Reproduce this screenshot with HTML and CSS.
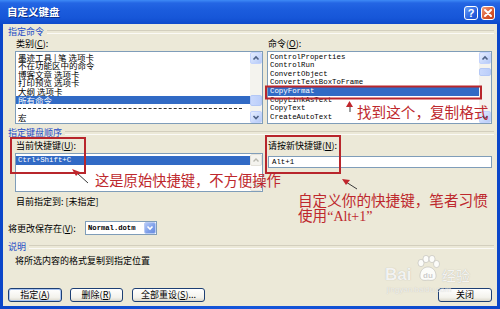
FILE: index.html
```html
<!DOCTYPE html>
<html>
<head>
<meta charset="utf-8">
<link rel="stylesheet" href="styles.css">
</head>
<body>
<div class="window">
  <div class="titlebar">
    <span class="title">自定义键盘</span>
    <div class="tbtns">
      <span class="tbtn help">?</span>
      <span class="tbtn close"><svg width="10" height="10" viewBox="0 0 10 10"><path d="M2 2 L8 8 M8 2 L2 8" stroke="#fff" stroke-width="2" stroke-linecap="round"/></svg></span>
    </div>
  </div>
  <div class="client">
    <div class="group"><span>指定命令</span></div>
    <div class="cols">
      <div class="col left">
        <div class="lbl">类别(<u>C</u>):</div>
        <div class="list tall">
          <div class="items cjk">
            <div class="it">墨迹工具 | 笔 选项卡</div>
            <div class="it">不在功能区中的命令</div>
            <div class="it">博客文章 选项卡</div>
            <div class="it">打印预览 选项卡</div>
            <div class="it">大纲 选项卡</div>
            <div class="it sel">所有命令</div>
            <div class="it dash"><span></span></div>
            <div class="it">宏</div>
          </div>
          <div class="sb">
            <div class="arr"><svg width="10" height="10" viewBox="0 0 10 10"><path d="M2.5 6.5 L5 4 L7.5 6.5" fill="none" stroke="#4D6185" stroke-width="1.6"/></svg></div>
            <div class="track"><div class="thumb t-left"></div></div>
            <div class="arr"><svg width="10" height="10" viewBox="0 0 10 10"><path d="M2.5 4 L5 6.5 L7.5 4" fill="none" stroke="#4D6185" stroke-width="1.6"/></svg></div>
          </div>
        </div>
      </div>
      <div class="col right">
        <div class="lbl">命令(<u>O</u>):</div>
        <div class="list tall">
          <div class="items mono">
            <div class="it">ControlProperties</div>
            <div class="it">ControlRun</div>
            <div class="it">ConvertObject</div>
            <div class="it">ConvertTextBoxToFrame</div>
            <div class="it sel">CopyFormat</div>
            <div class="it">CopyLinkAsText</div>
            <div class="it">CopyText</div>
            <div class="it">CreateAutoText</div>
          </div>
          <div class="sb">
            <div class="arr"><svg width="10" height="10" viewBox="0 0 10 10"><path d="M2.5 6.5 L5 4 L7.5 6.5" fill="none" stroke="#4D6185" stroke-width="1.6"/></svg></div>
            <div class="track"><div class="thumb t-right"></div></div>
            <div class="arr"><svg width="10" height="10" viewBox="0 0 10 10"><path d="M2.5 4 L5 6.5 L7.5 4" fill="none" stroke="#4D6185" stroke-width="1.6"/></svg></div>
          </div>
        </div>
      </div>
    </div>

    <div class="group g2"><span>指定键盘顺序</span></div>
    <div class="cols">
      <div class="col left">
        <div class="lbl l2">当前快捷键(<u>U</u>):</div>
        <div class="list short">
          <div class="items mono">
            <div class="it sel cur">Ctrl+Shift+C</div>
          </div>
          <div class="sb dis">
            <div class="arr"><svg width="10" height="10" viewBox="0 0 10 10"><path d="M2.5 6.5 L5 4 L7.5 6.5" fill="none" stroke="#B9B9B0" stroke-width="1.4"/></svg></div>
            <div class="track"></div>
            <div class="arr"><svg width="10" height="10" viewBox="0 0 10 10"><path d="M2.5 4 L5 6.5 L7.5 4" fill="none" stroke="#B9B9B0" stroke-width="1.4"/></svg></div>
          </div>
        </div>
      </div>
      <div class="col right">
        <div class="lbl l2">请按新快捷键(<u>N</u>):</div>
        <div class="input mono">Alt+1</div>
      </div>
    </div>

    <div class="row assigned">目前指定到: [未指定]</div>

    <div class="row saverow">
      <span class="savelbl">将更改保存在(<u>V</u>):</span>
      <div class="combo">
        <span class="cval mono">Normal.dotm</span>
        <span class="cbtn"><svg width="8" height="8" viewBox="0 0 8 8"><path d="M1.5 2.5 L4 5 L6.5 2.5" fill="none" stroke="#fff" stroke-width="1.6"/></svg></span>
      </div>
    </div>

    <div class="group g3"><span>说明</span></div>
    <div class="row desc">将所选内容的格式复制到指定位置</div>

    <div class="buttons">
      <span class="btn focus b1">指定(<u>A</u>)</span>
      <span class="btn b2">删除(<u>R</u>)</span>
      <span class="btn b3">全部重设(<u>S</u>)...</span>
      <span class="spacer"></span>
      <span class="btn b4">关闭</span>
    </div>
  </div>

  <svg class="marks" width="500" height="309" viewBox="0 0 500 309">
    <rect x="11" y="138" width="74" height="35" fill="none" stroke="#B8262C" stroke-width="2"/>
    <rect x="266" y="136" width="74" height="37" fill="none" stroke="#B8262C" stroke-width="2"/>
    <rect x="266" y="86.5" width="215" height="12" fill="none" stroke="#B8262C" stroke-width="2"/>
    <path d="M88 183 L77 173" stroke="#3a3a3a" stroke-width="1"/>
    <path d="M72 169 L80 172 L76 176 Z" fill="#C0262C"/>
    <path d="M350 112 L350 105" stroke="#3a3a3a" stroke-width="1"/>
    <path d="M349.5 101 L353 107 L346 107 Z" fill="#C0262C"/>
    <path d="M357 189 L346 182" stroke="#3a3a3a" stroke-width="1"/>
    <path d="M342 179 L350 180 L346 185 Z" fill="#C0262C"/>
  </svg>

  <div class="note n1">这是原始快捷键，不方便操作</div>
  <div class="note n2">找到这个，复制格式</div>
  <div class="note n3">自定义你的快捷键，笔者习惯<br>使用<span class="q">“Alt+1”</span></div>

  <div class="wm">
    <span class="wm-bai">Bai</span>
    <svg class="paw" width="26" height="27" viewBox="0 0 26 27">
      <g fill="rgba(255,255,255,0.85)" stroke="rgba(150,150,150,0.45)" stroke-width="0.8">
        <ellipse cx="6" cy="8" rx="3" ry="3.6"/>
        <ellipse cx="11" cy="4" rx="3" ry="3.6"/>
        <ellipse cx="17" cy="4" rx="3" ry="3.6"/>
        <ellipse cx="21.5" cy="9" rx="3" ry="3.6"/>
        <path d="M5 21 C5 15 9 12 13 12 C17 12 21 15 21 21 C21 25 17 26 13 25 C9 26 5 25 5 21 Z"/>
      </g>
      <text x="8" y="23" font-family="Liberation Sans" font-size="8" font-weight="bold" fill="rgba(170,170,170,0.6)">du</text>
    </svg>
    <span class="wm-jy">经验</span>
    <span class="wm-url">jingyan.baidu.com</span>
  </div>
</div>
</body>
</html>
```

FILE: styles.css
```css
* { box-sizing: border-box; }
html, body { margin: 0; padding: 0; }
body {
  width: 500px;
  height: 309px;
  overflow: hidden;
  font-family: "Noto Sans CJK SC", sans-serif;
  font-size: 9px;
  color: #000;
  background: #0A4BD6;
}
u { text-decoration: underline; text-underline-offset: 1px; }

.window {
  position: relative;
  width: 500px;
  height: 309px;
  display: flex;
  flex-direction: column;
  background: linear-gradient(90deg, #0B46C9, #1556DA 50%, #0B46C9);
}

.titlebar {
  height: 24px;
  flex: none;
  display: flex;
  align-items: center;
  justify-content: space-between;
  padding: 0 5px 0 7px;
  background: linear-gradient(#3E8AF6 0, #2466E4 3px, #1B5CDD 10px, #1656D8 18px, #0F4ACB 24px);
}
.title {
  color: #fff;
  font-weight: bold;
  font-size: 10.5px;
  line-height: 12px;
  text-shadow: 1px 1px 0 #0A2E8C;
}
.tbtns { display: flex; gap: 3px; padding-top: 1px; }
.tbtn {
  width: 14px;
  height: 14px;
  border: 1px solid #fff;
  border-radius: 3px;
  display: flex;
  align-items: center;
  justify-content: center;
}
.help {
  background: linear-gradient(135deg, #6AA0F8, #2A63E0 60%, #1B4FCF);
  color: #fff;
  font: bold 11px "Liberation Sans", sans-serif;
  line-height: 12px;
}
.close { background: linear-gradient(135deg, #F0A080, #DA5A30 55%, #C4401C); }

.client {
  flex: 1;
  margin: 0 3px 3px 3px;
  background: #ECE9D8;
  padding-top: 3px;
  display: flex;
  flex-direction: column;
}

.group {
  height: 10px;
  line-height: 10px;
  display: flex;
  align-items: center;
  gap: 3px;
  padding-left: 5px;
  padding-right: 3px;
  color: #1E4CC6;
}
.group::after {
  content: "";
  flex: 1;
  height: 2px;
  border-top: 1px solid #D3CFBE;
  border-bottom: 1px solid #FBFAF6;
}
.g2 { margin-top: 4px; }
.g3 { margin-top: 7px; }

.cols {
  display: flex;
  gap: 4px;
  padding-left: 12px;
}
.col.left { width: 248px; }
.col.right { width: 225px; }

.lbl {
  height: 10px;
  line-height: 10px;
  margin: 2px 0 2px 1px;
}
.lbl.l2 { margin-top: 3px; }

.list {
  display: flex;
  background: #fff;
  border: 1px solid #7F9DB9;
}
.list.tall { height: 73px; }
.list.short { height: 39px; }

.items {
  flex: 1;
  padding-top: 0.5px;
}
.it {
  height: 8.65px;
  line-height: 8.65px;
  padding-left: 2px;
  white-space: nowrap;
}
.cjk .it { font-size: 8.5px; }
.mono .it, .mono {
  font-family: "Liberation Mono", monospace;
  font-size: 7.4px;
}
.it.sel { background: #316AC5; color: #fff; }
.it.cur { height: 9px; line-height: 9px; margin-top: 1px; }
.it.dash { display: flex; align-items: center; padding: 0 8px 0 2px; }
.it.dash span { flex: 1; border-top: 1px dashed #333; }

.sb {
  width: 12px;
  flex: none;
  display: flex;
  flex-direction: column;
  background: #F4F3EE;
}
.arr {
  height: 12px;
  flex: none;
  display: flex;
  align-items: center;
  justify-content: center;
  border: 1px solid #C3D3FD;
  border-radius: 2px;
  background: linear-gradient(135deg, #E6EEFE, #C8D8FB 60%, #B6CAF6);
}
.track { flex: 1; display: flex; flex-direction: column; }
.thumb {
  height: 11px;
  border: 1px solid #B4C8F6;
  border-radius: 2px;
  background: linear-gradient(90deg, #C9D8FC, #BBCEFA);
}
.t-left { margin-top: 31px; }
.t-right { margin-top: 4px; height: 8px; }
.sb.dis { background: #fff; }
.sb.dis .arr {
  border-color: #E4E2DA;
  background: #F4F3EE;
}

.input {
  height: 12px;
  line-height: 10px;
  margin-top: 5px;
  margin-left: 1px;
  padding-left: 3px;
  background: #fff;
  border: 1px solid #7F9DB9;
  font-family: "Liberation Mono", monospace;
  font-size: 7.4px;
}

.row { line-height: 10px; height: 10px; }
.assigned { margin-top: 5px; padding-left: 13px; }

.saverow {
  margin-top: 14px;
  height: 14px;
  display: flex;
  align-items: center;
  padding-left: 5px;
}
.savelbl { width: 77px; line-height: 10px; padding-top: 1px; }
.combo {
  width: 72px;
  height: 14px;
  display: flex;
  background: #fff;
  border: 1px solid #7F9DB9;
}
.cval {
  flex: 1;
  padding-left: 2px;
  line-height: 12px;
  font-weight: bold;
  font-size: 7.2px;
}
.cbtn {
  width: 12px;
  display: flex;
  align-items: center;
  justify-content: center;
  border: 1px solid #B9CBF5;
  border-radius: 2px;
  background: linear-gradient(135deg, #B5CAF8, #7C9DE8 60%, #6A8DE0);
}

.desc { margin-top: 4px; padding-left: 12px; }

.buttons {
  margin-top: 22px;
  height: 14px;
  display: flex;
  padding: 0 5px;
}
.btn {
  height: 14px;
  display: flex;
  align-items: center;
  justify-content: center;
  border: 1px solid #1D3F74;
  border-radius: 3px;
  background: linear-gradient(#FFFFFF, #F3F2EC 70%, #DCD8CB);
  line-height: 10px;
}
.btn.focus { box-shadow: inset 0 0 0 1px #A9C4F2; }
.b1 { width: 54px; }
.b2 { width: 53px; margin-left: 8px; }
.b3 { width: 73px; margin-left: 9px; }
.b4 { width: 54px; }
.spacer { flex: 1; }

.marks {
  position: absolute;
  left: 0;
  top: 0;
  pointer-events: none;
}

.note {
  position: absolute;
  color: #BE282D;
  font-family: "Noto Sans CJK SC", sans-serif;
  white-space: nowrap;
}
.n1 { left: 95px; top: 171px; font-size: 14.3px; line-height: 17px; }
.n2 { left: 357px; top: 103px; font-size: 14.6px; line-height: 17px; }
.n3 { left: 298px; top: 192px; font-size: 14.6px; line-height: 15px; }
.q { font-family: "Liberation Serif", serif; font-size: 14px; }

.wm {
  position: absolute;
  left: 384px;
  top: 254px;
  width: 100px;
  height: 44px;
  pointer-events: none;
}
.wm-bai {
  position: absolute;
  left: 1px;
  top: 11px;
  font: bold 17px "Liberation Sans", sans-serif;
  color: rgba(255,255,255,0.85);
  text-shadow: 0 0 1px rgba(120,120,120,0.5);
}
.paw { position: absolute; left: 31px; top: 1px; }
.wm-jy {
  position: absolute;
  left: 58px;
  top: 13px;
  font-size: 14px;
  line-height: 16px;
  color: rgba(255,255,255,0.85);
  text-shadow: 0 0 1px rgba(120,120,120,0.5);
}
.wm-url {
  position: absolute;
  left: 3px;
  top: 31px;
  font: 8px "Liberation Sans", sans-serif;
  color: rgba(255,255,255,0.7);
  text-shadow: 0 0 1px rgba(120,120,120,0.4);
}
```
